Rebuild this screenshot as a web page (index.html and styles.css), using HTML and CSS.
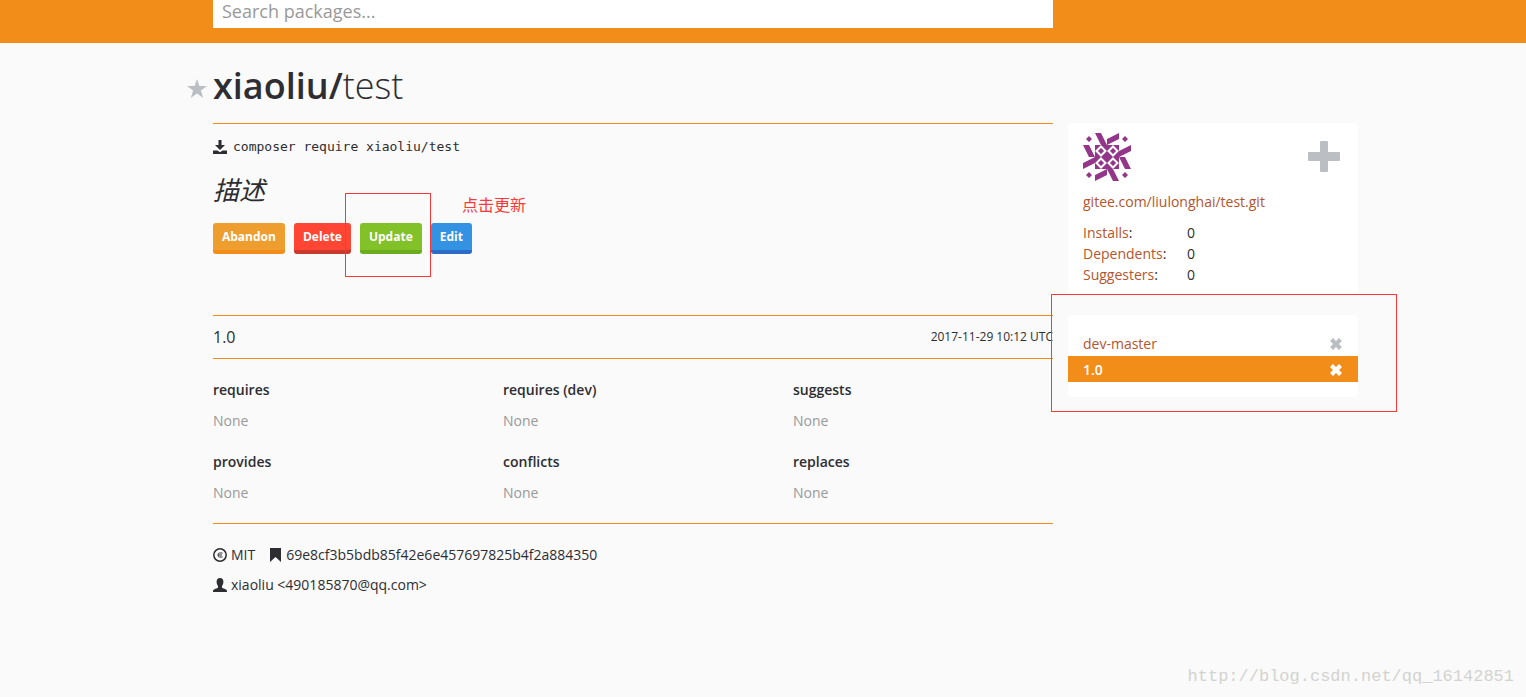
FILE: index.html
```html
<!DOCTYPE html>
<html lang="en">
<head>
<meta charset="utf-8">
<title>xiaoliu/test</title>
<link rel="stylesheet" href="styles.css">
</head>
<body>
<header class="topbar">
  <div class="container">
    <form class="search"><input class="search-input" type="search" placeholder="Search packages..." aria-label="Search packages"></form>
  </div>
</header>
<main class="container page">
  <h1 class="title">
    <button class="star" type="button" aria-label="Favourite"><svg viewBox="0 0 20 19" width="20" height="19"><path d="M10 0l2.400 7H20l-6.100 4.400L16.200 19 10 14.400 3.800 19l2.300-7.600L0 7h7.600z"/></svg></button>
    <span class="vendor">xiaoliu/</span><span class="name">test</span>
  </h1>
  <section class="content">
    <p class="require"><svg class="icon" viewBox="0 0 14 14" width="14" height="14"><path d="M5.500 0h3v5H12L7 10 2 5h3.500zM0 10.500h4.500L7 12.300l2.500-1.800H14V14H0z"/></svg><code>composer require xiaoliu/test</code></p>
    <p class="description">描述</p>
    <div class="actions">
      <button class="btn btn-abandon" type="button">Abandon</button>
      <button class="btn btn-delete" type="button">Delete</button>
      <div class="marked"><button class="btn btn-update" type="button">Update</button><span class="mark mark-update"></span><span class="note">点击更新</span></div>
      <button class="btn btn-edit" type="button">Edit</button>
    </div>
    <div class="version-head">
      <h2 class="version-number">1.0</h2>
      <time class="date">2017-11-29 10:12 UTC</time>
    </div>
    <div class="links">
      <div><h3>requires</h3><p>None</p></div>
      <div><h3>requires (dev)</h3><p>None</p></div>
      <div><h3>suggests</h3><p>None</p></div>
      <div><h3>provides</h3><p>None</p></div>
      <div><h3>conflicts</h3><p>None</p></div>
      <div><h3>replaces</h3><p>None</p></div>
    </div>
    <div class="meta">
      <p class="meta-row">
        <span class="meta-item"><svg class="icon" viewBox="0 0 14 14" width="14" height="14"><circle cx="7" cy="7" r="6.200" fill="none" stroke="currentColor" stroke-width="1.500"/><path d="M9.500 5H6.500Q5 5 5 7t1.500 2h3M5 7h4" fill="none" stroke="currentColor" stroke-width="1"/></svg>MIT</span>
        <span class="meta-item"><svg class="icon" viewBox="0 0 12 14" width="12" height="14"><path d="M0 0h11v14L5.500 9 0 14z"/></svg>69e8cf3b5bdb85f42e6e457697825b4f2a884350</span>
      </p>
      <p class="meta-row"><span class="meta-item"><svg class="icon" viewBox="0 0 14 14" width="14" height="14"><path d="M7 0c2.300 0 3.400 1.600 3.400 3.800C10.400 6 9.600 7 9 8v1.500c.3 1 5 1.300 5 3.500v1H0v-1c0-2.200 4.700-2.500 5-3.500V8c-.6-1-1.400-2-1.400-4.200C3.600 1.600 4.700 0 7 0z"/></svg>xiaoliu &lt;490185870@qq.com&gt;</span></p>
    </div>
  </section>
  <aside class="sidebar">
    <section class="card info">
      <div class="maintainers">
        <svg class="avatar" viewBox="0 0 48 48" width="48" height="48">
          <defs><g id="side"><path d="M12 0h6l6 12h-6zM24 6l12-6v6l-12 6zM6 3l3 3-3 3-3-3z"/></g></defs>
          <path d="M12 12h24v24H12z"/>
          <use href="#side"/><use href="#side" transform="rotate(90 24 24)"/><use href="#side" transform="rotate(180 24 24)"/><use href="#side" transform="rotate(270 24 24)"/>
          <path d="M18 13.500l4.500 4.500-4.500 4.500-4.500-4.500zM30 13.500l4.500 4.500-4.500 4.500-4.500-4.500zM18 25.500l4.500 4.500-4.500 4.500-4.500-4.500zM30 25.500l4.500 4.500-4.500 4.500-4.500-4.500z" fill="none" stroke="#fff" stroke-width="2"/>
        </svg>
        <button class="plus" type="button" aria-label="Add maintainer"><svg viewBox="0 0 32 32" width="32" height="32"><path d="M13 0h6q1 0 1 1v10h11q1 0 1 1v7q0 1-1 1H20v10q0 1-1 1h-6q-1 0-1-1V20H1q-1 0-1-1v-7q0-1 1-1h11V1q0-1 1-1z"/></svg></button>
      </div>
      <a class="repo" href="#">gitee.com/liulonghai/test.git</a>
      <dl class="facts">
        <dt><a href="#">Installs</a>:</dt><dd>0</dd>
        <dt><a href="#">Dependents</a>:</dt><dd>0</dd>
        <dt><a href="#">Suggesters</a>:</dt><dd>0</dd>
      </dl>
    </section>
    <section class="card versions">
      <div class="version"><a href="#">dev-master</a><button class="remove" type="button" aria-label="Delete dev-master"><svg viewBox="0 0 12 12" width="12" height="12"><path d="M3 0l3 3 3-3 3 3-3 3 3 3-3 3-3-3-3 3-3-3 3-3-3-3z"/></svg></button></div>
      <div class="version current"><a href="#">1.0</a><button class="remove" type="button" aria-label="Delete 1.0"><svg viewBox="0 0 12 12" width="12" height="12"><path d="M3 0l3 3 3-3 3 3-3 3 3 3-3 3-3-3-3 3-3-3 3-3-3-3z"/></svg></button></div>
      <span class="mark mark-versions"></span>
    </section>
  </aside>
</main>
<footer class="watermark">http://blog.csdn.net/qq_16142851</footer>
</body>
</html>
```
FILE: styles.css
```css
* { box-sizing: border-box; }
body {
  margin: 0;
  min-height: 100vh;
  display: flex;
  flex-direction: column;
  background: #fafafa;
  color: #2d2d32;
  font: 14px/20px "Open Sans", "Noto Sans CJK SC", sans-serif;
}
h1, h2, h3, p, dl, dd { margin: 0; font-weight: 400; }
a { color: #b4552d; text-decoration: none; }
button { padding: 0; border: 0; background: none; font: inherit; color: inherit; cursor: pointer; }
svg { display: block; fill: currentColor; }
.icon { flex: none; }
.container {
  width: 100%;
  max-width: 1190px;
  margin: 0 auto;
  padding-left: 45px;
  display: grid;
  grid-template-columns: minmax(0, 1fr) 290px;
  column-gap: 15px;
}
.topbar { background: #f28d1a; padding-bottom: 15px; }
.search { display: flex; }
.search-input {
  width: 100%;
  height: 28px;
  padding: 0 9px 6px;
  border: 0;
  border-radius: 0;
  background: #fff;
  font: 18px/22px "Open Sans", sans-serif;
  color: #2d2d32;
}
.search-input::placeholder { color: #999; }
.title {
  grid-column: 1 / -1;
  position: relative;
  height: 80px;
  display: flex;
  font-size: 36px;
  line-height: 86px;
}
.vendor { font-weight: 600; }
.name { font-weight: 300; }
.star { position: absolute; right: 100%; top: 36px; margin-right: 6px; color: #bbbfc4; }
.content { border-top: 1px solid #f28d1a; padding-top: 13px; }
.require { display: flex; align-items: center; gap: 6px; }
.require code { font: 13px/20px "DejaVu Sans Mono", monospace; }
.description { margin-top: 13px; font-size: 26px; line-height: 40px; font-style: italic; font-weight: 400; }
.actions { display: flex; gap: 9px; margin-top: 13px; }
.btn {
  height: 31px;
  padding: 0 9px;
  border-bottom: 4px solid;
  border-radius: 3px;
  color: #fff;
  font-size: 12px;
  line-height: 27px;
  font-weight: 700;
}
.btn-abandon { background: #ee9e2e; border-color: #f28d1a; }
.btn-delete { background: #ff4533; border-color: #ca3a2c; }
.btn-update { background: #83c129; border-color: #6aad21; }
.btn-edit { background: #3492e2; border-color: #2d6bc9; }
.marked { position: relative; }
.mark { position: absolute; border: 1px solid #fb3838; pointer-events: none; z-index: 1; }
.mark-update { inset: -30px -9px -23px -15px; }
.mark-versions { inset: -21px -39px -15px -17px; }
.note {
  position: absolute;
  left: 102px;
  top: -31px;
  color: #fb3838;
  font: 400 16px/24px "Noto Sans CJK SC", sans-serif;
  white-space: nowrap;
}
.version-head {
  display: flex;
  justify-content: space-between;
  align-items: center;
  margin-top: 61px;
  height: 44px;
  border-top: 1px solid #f28d1a;
  border-bottom: 1px solid #f28d1a;
}
.version-number { font-size: 16px; font-weight: 500; }
.date { font-size: 12px; }
.links {
  display: grid;
  grid-template-columns: 290px 290px 1fr;
  row-gap: 21px;
  padding: 21px 0 20px;
  border-bottom: 1px solid #f28d1a;
}
.links h3 { font-size: 14px; font-weight: 600; }
.links p { margin-top: 11px; color: #999; }
.meta { padding-top: 21px; }
.meta-row { display: flex; gap: 15px; margin-bottom: 10px; }
.meta-item { display: flex; align-items: center; gap: 4px; }
.card { position: relative; background: #fff; border-radius: 3px; }
.info { padding: 10px 15px 9px; }
.maintainers { display: flex; justify-content: space-between; align-items: center; }
.avatar { color: #93368a; }
.plus { color: #bbbfc4; margin-right: 3px; }
.repo { display: block; margin-top: 11px; }
.facts {
  display: grid;
  grid-template-columns: 104px 1fr;
  line-height: 21px;
  margin-top: 10px;
}
.versions { margin-top: 21px; padding: 15px 0; }
.version {
  display: flex;
  justify-content: space-between;
  align-items: center;
  height: 26px;
  padding: 2px 16px 0 15px;
}
.remove { color: #bbbfc4; }
.current { background: #f28d1a; }
.current a, .current .remove { color: #fff; }
.current a { font-weight: 600; }
.watermark {
  margin-top: auto;
  padding: 0 12px 8px;
  text-align: right;
  color: #d3d3cf;
  font: 17px/24px "Liberation Mono", monospace;
}
```
